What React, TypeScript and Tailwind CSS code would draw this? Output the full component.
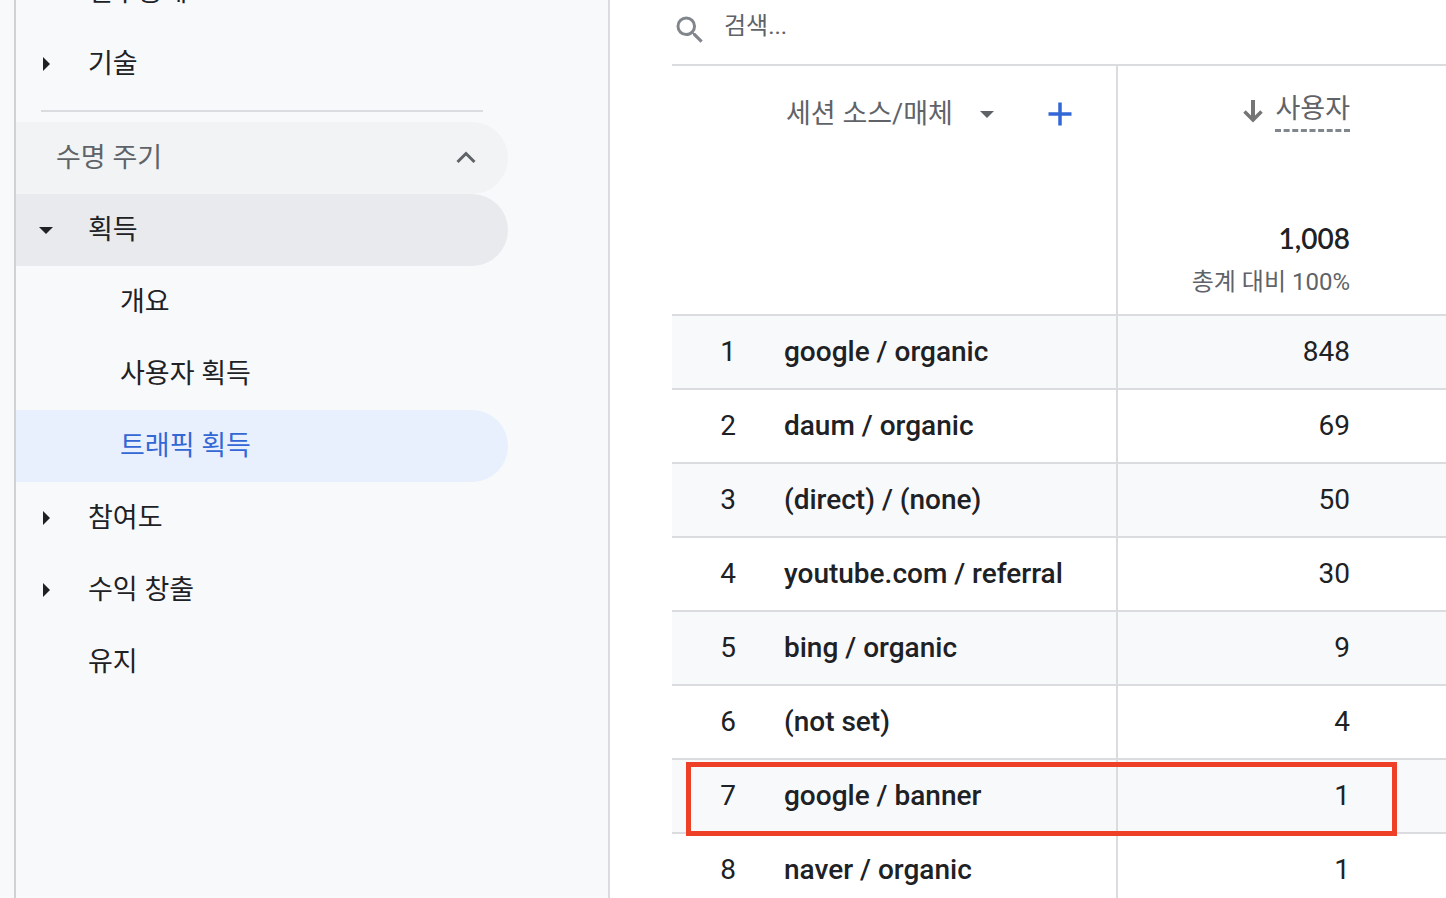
import { useState } from 'react'
import clsx from 'clsx'

type NavItem = {
  label: string
  level: 1 | 2
  arrow?: 'right' | 'down'
}

const topItems: NavItem[] = [
  { label: '인구통계', level: 1 },
  { label: '기술', level: 1, arrow: 'right' },
]

const lifecycleItems: NavItem[] = [
  { label: '획득', level: 1, arrow: 'down' },
  { label: '개요', level: 2 },
  { label: '사용자 획득', level: 2 },
  { label: '트래픽 획득', level: 2 },
  { label: '참여도', level: 1, arrow: 'right' },
  { label: '수익 창출', level: 1, arrow: 'right' },
  { label: '유지', level: 1 },
]

const rows = [
  { source: 'google / organic', users: 848 },
  { source: 'daum / organic', users: 69 },
  { source: '(direct) / (none)', users: 50 },
  { source: 'youtube.com / referral', users: 30 },
  { source: 'bing / organic', users: 9 },
  { source: '(not set)', users: 4 },
  { source: 'google / banner', users: 1, marked: true },
  { source: 'naver / organic', users: 1 },
]

function Caret({ direction, className }: { direction?: 'right' | 'down'; className?: string }) {
  return (
    <svg viewBox="0 0 24 24" className={clsx('size-6 shrink-0', className)} fill="currentColor" aria-hidden="true">
      {direction === 'right' && <path d="M9 5l7 7-7 7z" />}
      {direction === 'down' && <path d="M5 9h14l-7 7z" />}
    </svg>
  )
}

function NavLink({ item, active, onSelect }: { item: NavItem; active: boolean; onSelect: (label: string) => void }) {
  return (
    <li>
      <a
        href="#"
        onClick={(e) => {
          e.preventDefault()
          onSelect(item.label)
        }}
        className={clsx(
          'flex h-18 items-center gap-[30px] rounded-l-sm rounded-r-full',
          item.level === 1 ? 'pl-[18px]' : 'pl-26',
          active && 'bg-[#e8f0fe] text-[#3367d6]',
          item.arrow === 'down' && 'bg-[#e8eaed]',
        )}
      >
        {item.level === 1 && <Caret direction={item.arrow} />}
        {item.label}
      </a>
    </li>
  )
}

function Sidebar() {
  const [selected, setSelected] = useState('트래픽 획득')

  return (
    <aside className="w-[610px] shrink-0 border-r-2 border-[#dadce0] bg-[#f8f9fb] pl-3.5">
      <nav className="h-full overflow-hidden border-l-2 border-[#d0d1d4] pr-25 text-[27px] text-[#202124]">
        {/* list is scrolled a little past its first entry */}
        <ul className="-mt-11">
          {topItems.map((item) => (
            <NavLink key={item.label} item={item} active={selected === item.label} onSelect={setSelected} />
          ))}
        </ul>
        <hr className="my-2.5 mr-[25px] ml-[25px] border-t-2 border-[#dadce0]" />
        <button
          type="button"
          className="flex h-18 w-full items-center justify-between rounded-l-sm rounded-r-full bg-[#f1f3f4] pr-[30px] pl-10 text-[#5f6368]"
        >
          수명 주기
          <svg viewBox="0 0 24 24" className="size-6" fill="none" stroke="currentColor" strokeWidth="3" aria-hidden="true">
            <path d="M3.5 16L12 7.5l8.5 8.5" />
          </svg>
        </button>
        <ul>
          {lifecycleItems.map((item) => (
            <NavLink key={item.label} item={item} active={selected === item.label} onSelect={setSelected} />
          ))}
        </ul>
      </nav>
    </aside>
  )
}

function SearchBar() {
  return (
    <div className="flex h-16 items-center gap-4">
      <label htmlFor="table-search" aria-label="검색">
        <svg viewBox="0 0 24 24" className="-mt-1 size-9 text-[#80868b]" fill="currentColor" aria-hidden="true">
          <path d="M15.5 14h-.79l-.28-.27A6.47 6.47 0 0 0 16 9.5 6.5 6.5 0 1 0 9.5 16c1.61 0 3.09-.59 4.23-1.57l.27.28v.79l5 4.99L20.49 19l-4.99-5zm-6 0C7.01 14 5 11.99 5 9.5S7.01 5 9.5 5 14 7.01 14 9.5 11.99 14 9.5 14z" />
        </svg>
      </label>
      <input
        id="table-search"
        type="text"
        placeholder="검색..."
        className="h-full flex-1 bg-transparent pb-3 text-[24px] text-[#202124] outline-none placeholder:text-[#5f6368]"
      />
    </div>
  )
}

function TrafficTable() {
  return (
    <table className="w-full table-fixed border-separate border-spacing-0 border-t-2 border-[#dadce0] text-[28px] text-[#202124]">
      <colgroup>
        <col className="w-28" />
        <col className="w-[334px]" />
        <col />
      </colgroup>
      <thead>
        <tr className="h-[150px] align-top text-[27px] text-[#5f6368]">
          <td />
          <th scope="col" className="border-r-2 border-[#dadce0] pt-7 font-normal">
            <div className="flex h-10 items-center">
              <div className="relative">
                <select aria-label="측정기준" className="block h-10 appearance-none bg-transparent pr-[46px] pl-0.5 outline-none">
                  <option>세션 소스/매체</option>
                </select>
                <Caret direction="down" className="pointer-events-none absolute top-2 right-0" />
              </div>
              <button type="button" aria-label="측정기준 추가" className="ml-[49px] text-[#3367d6]">
                <svg viewBox="0 0 24 24" className="size-6" stroke="currentColor" strokeWidth="3.5" aria-hidden="true">
                  <path d="M12 .5v23M.5 12h23" />
                </svg>
              </button>
            </div>
          </th>
          <th scope="col" className="pt-6 pr-24 font-normal">
            <div className="flex items-start justify-end gap-2.5">
              <svg viewBox="0 0 24 24" className="mt-2.5 size-6" fill="none" stroke="#757575" aria-hidden="true">
                <path d="M12 0v20" strokeWidth="4" />
                <path d="M3.5 11.5l8.5 8.5 8.5-8.5" strokeWidth="3.5" />
              </svg>
              <button type="button" className="border-b-3 border-dashed border-[#80868b] leading-[39px]">
                사용자
              </button>
            </div>
          </th>
        </tr>
        <tr className="h-25 align-top">
          <td className="border-b-2 border-[#dadce0]" />
          <td className="border-r-2 border-b-2 border-[#dadce0]" />
          <td className="border-b-2 border-[#dadce0] pr-24 text-right leading-11">
            <div className="font-[Lato,sans-serif] font-semibold">1,008</div>
            <div className="text-[24px] leading-11 text-[#5f6368]">총계 대비 100%</div>
          </td>
        </tr>
      </thead>
      <tbody>
        {rows.map((row, i) => (
          <tr key={row.source} className={clsx('h-[74px] odd:bg-[#f8f9fb]', row.marked && 'relative z-10')}>
            <td className="border-b-2 border-[#dadce0] text-center">
              {i + 1}
              {row.marked && (
                <span className="absolute top-0.5 right-[49px] left-3.5 h-[74px] border-5 border-[#ee4026]" />
              )}
            </td>
            <td className="border-r-2 border-b-2 border-[#dadce0] font-medium whitespace-nowrap">{row.source}</td>
            <td className="border-b-2 border-[#dadce0] pr-24 text-right">{row.users}</td>
          </tr>
        ))}
      </tbody>
    </table>
  )
}

export default function App() {
  return (
    <div className="flex h-screen overflow-hidden bg-white font-[Roboto,'Noto_Sans_CJK_KR',sans-serif]">
      <Sidebar />
      <main className="min-w-0 flex-1 pl-[62px]">
        <SearchBar />
        <TrafficTable />
      </main>
    </div>
  )
}
